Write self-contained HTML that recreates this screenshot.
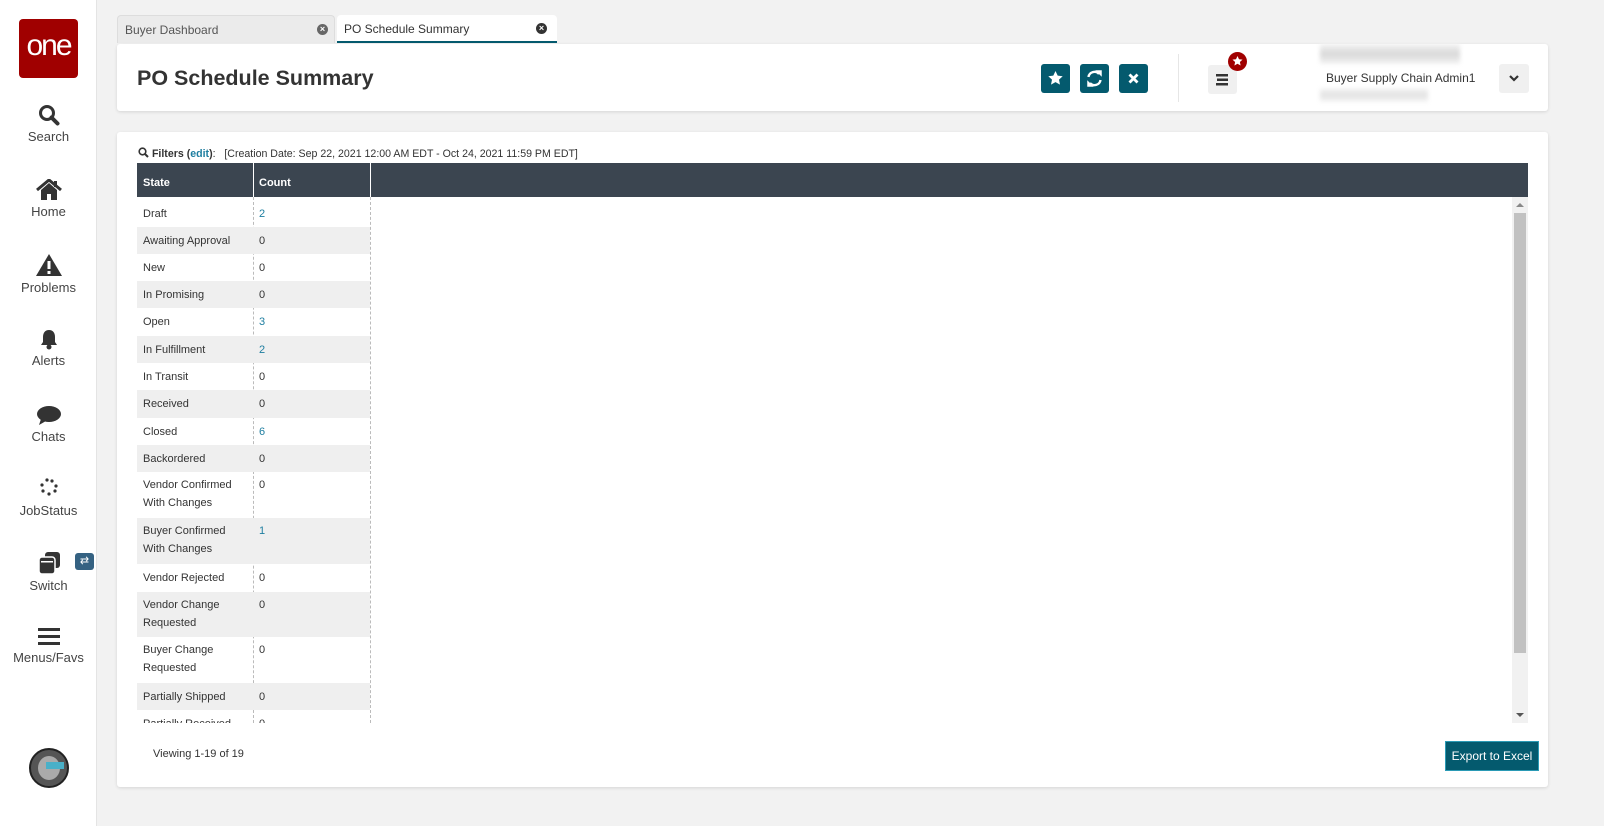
<!DOCTYPE html>
<html><head><style>
*{box-sizing:border-box;margin:0;padding:0}
body{width:1604px;height:826px;background:#f2f2f2;font-family:"Liberation Sans",sans-serif;position:relative;overflow:hidden;color:#333}
.side{position:absolute;left:0;top:0;width:97px;height:826px;background:#fff;border-right:1px solid #e4e4e4}
.logo{position:absolute;left:19px;top:19px;width:59px;height:59px;background:#a00000;border-radius:4px;color:#fff;font-size:30px;text-align:center;line-height:54px;letter-spacing:-2px}
.nav{position:absolute;left:0;width:97px;text-align:center;font-size:13px;color:#444}
.nav svg{display:block;margin:0 auto 3px}
.tab{position:absolute;top:15px;height:28px;font-size:12px;line-height:28px;padding-left:7px;border-radius:4px 4px 0 0}
.x{position:absolute;top:8px;width:11px;height:11px;border-radius:50%;color:#fff;font-size:9px;line-height:11px;text-align:center;font-weight:bold}
.card{position:absolute;left:117px;width:1431px;background:#fff;border-radius:3px;box-shadow:0 1px 3px rgba(0,0,0,.12)}
.btn{position:absolute;top:64px;width:29px;height:29px;background:#045a6e;border-radius:3px}
.hd{position:absolute;left:137px;top:163px;width:1391px;height:34px;background:#3b4550}
.hd div{position:absolute;top:0;height:34px;line-height:40px;color:#fff;font-weight:bold;font-size:11px;padding-left:6px;border-right:1px solid #fff}
.row{position:absolute;left:137px;width:233px;font-size:11px;color:#333}
.row .s{position:absolute;left:6px;line-height:18px}
.row .c{position:absolute;left:122px;line-height:18px}
.g{background:#efefef}
a{color:#1e7ea0;text-decoration:none}
</style></head><body>
<div class="side">
<div class="logo">one</div>
<div class="nav" style="top:104px"><svg width="22" height="22" viewBox="0 0 22 22"><circle cx="9" cy="9" r="6.5" fill="none" stroke="#333" stroke-width="3"/><path d="M13.5 13.5L19.5 19.5" stroke="#333" stroke-width="4" stroke-linecap="round"/></svg>Search</div>
<div class="nav" style="top:179px"><svg width="26" height="22" viewBox="0 0 26 22"><path d="M1 11L13 1 25 11" fill="none" stroke="#333" stroke-width="3"/><path d="M5 11v10h6v-6h4v6h6V11L13 4z" fill="#333"/><rect x="18" y="2" width="3" height="6" fill="#333"/></svg>Home</div>
<div class="nav" style="top:253px"><svg width="28" height="24" viewBox="0 0 28 24"><path d="M14 1L27 23H1z" fill="#333"/><rect x="12.5" y="8" width="3" height="8" fill="#fff"/><rect x="12.5" y="18" width="3" height="3" fill="#fff"/></svg>Problems</div>
<div class="nav" style="top:328px"><svg width="22" height="22" viewBox="0 0 22 22"><path d="M11 2c-4 0-6 3-6 7v5l-2 3h16l-2-3V9c0-4-2-7-6-7z" fill="#333"/><circle cx="11" cy="19" r="2.5" fill="#333"/></svg>Alerts</div>
<div class="nav" style="top:405px"><svg width="26" height="21" viewBox="0 0 26 21"><ellipse cx="13" cy="9" rx="12" ry="8" fill="#333"/><path d="M5 14L3 20 10 16z" fill="#333"/></svg>Chats</div>
<div class="nav" style="top:478px"><svg width="26" height="22" viewBox="0 0 26 22"><g fill="#333"><circle cx="11" cy="2" r="1.6"/><circle cx="16" cy="3" r="1.6"/><circle cx="6" cy="7" r="1.6"/><circle cx="20" cy="8" r="1.6"/><circle cx="7" cy="13" r="1.6"/><circle cx="19" cy="13" r="1.6"/><circle cx="13" cy="16" r="1.6"/></g></svg>JobStatus</div>
<div class="nav" style="top:551px"><svg width="26" height="24" viewBox="0 0 26 24"><rect x="9" y="1" width="15" height="16" rx="3" fill="#333"/><rect x="3" y="6" width="16" height="17" rx="3" fill="#333" stroke="#fff" stroke-width="1.5"/><rect x="5" y="10" width="12" height="1.5" fill="#fff"/></svg>Switch</div>
<div style="position:absolute;left:75px;top:553px;width:19px;height:17px;background:#356282;border-radius:3px;color:#fff;font-size:11px;text-align:center;line-height:17px">⇄</div>
<div class="nav" style="top:627px"><svg width="24" height="20" viewBox="0 0 24 20"><rect x="1" y="1" width="22" height="3" fill="#333"/><rect x="1" y="8" width="22" height="3" fill="#333"/><rect x="1" y="15" width="22" height="3" fill="#333"/></svg>Menus/Favs</div>
<div style="position:absolute;left:29px;top:748px;width:40px;height:40px;border-radius:50%;background:#555;border:2px solid #222"><div style="position:absolute;left:7px;top:6px;width:22px;height:24px;border-radius:50%;background:#aaa"></div><div style="position:absolute;left:15px;top:12px;width:18px;height:7px;background:#4ab0c8"></div></div>
</div>
<div class="tab" style="left:117px;width:218px;background:#ebebeb;color:#555;border:1px solid #ddd;border-bottom:none">Buyer Dashboard<span class="x" style="left:199px;background:#666">×</span></div>
<div class="tab" style="left:337px;width:220px;background:#fff;color:#333;border-bottom:2px solid #045a6e">PO Schedule Summary<span class="x" style="left:199px;background:#333">×</span></div>
<div class="card" style="top:44px;height:67px">
<div style="position:absolute;left:20px;top:22px;font-size:21.5px;font-weight:bold;color:#333">PO Schedule Summary</div>
</div>
<div class="btn" style="left:1041px"><svg width="29" height="29" viewBox="0 0 29 29"><path d="M14.5 7l2.2 4.6 5 .6-3.7 3.4 1 5-4.5-2.5-4.5 2.5 1-5-3.7-3.4 5-.6z" fill="#fff"/></svg></div>
<div class="btn" style="left:1080px"><svg width="29" height="29" viewBox="0 0 29 29"><path d="M8.5 13a6 6 0 0 1 10.5-3M20.5 16a6 6 0 0 1-10.5 3" fill="none" stroke="#fff" stroke-width="2.4"/><path d="M17 7h4v4zM12 22H8v-4z" fill="#fff" stroke="#fff" stroke-width="1.5"/></svg></div>
<div class="btn" style="left:1119px"><svg width="29" height="29" viewBox="0 0 29 29"><path d="M10.5 10.5l8 8M18.5 10.5l-8 8" stroke="#fff" stroke-width="2.8"/></svg></div>
<div style="position:absolute;left:1178px;top:54px;width:1px;height:48px;background:#e6e6e6"></div>
<div style="position:absolute;left:1208px;top:65px;width:29px;height:29px;background:#f0f0f0;border-radius:3px"><svg width="29" height="29" viewBox="0 0 29 29"><rect x="8" y="9" width="12" height="2.5" fill="#333"/><rect x="9" y="13.5" width="11" height="2.5" fill="#333"/><rect x="8" y="18" width="12" height="2.5" fill="#333"/></svg></div>
<div style="position:absolute;left:1228px;top:52px;width:19px;height:19px;border-radius:50%;background:#a00000"><svg width="19" height="19" viewBox="0 0 19 19"><path d="M9.5 4l1.5 3.2 3.5.4-2.6 2.4.7 3.5-3.1-1.8-3.1 1.8.7-3.5-2.6-2.4 3.5-.4z" fill="#fff"/></svg></div>
<div style="position:absolute;left:1320px;top:44px;width:140px;height:20px;background:linear-gradient(#f4f4f4,#d8d8d8,#f4f4f4);filter:blur(2px)"></div>
<div style="position:absolute;left:1326px;top:71px;font-size:12px;color:#333">Buyer Supply Chain Admin1</div>
<div style="position:absolute;left:1320px;top:88px;width:108px;height:14px;background:linear-gradient(#f6f6f6,#e2e2e2,#f6f6f6);filter:blur(2px)"></div>
<div style="position:absolute;left:1499px;top:64px;width:30px;height:29px;background:#f0f0f0;border-radius:3px"><svg width="30" height="29" viewBox="0 0 30 29"><path d="M11 12l4 4 4-4" fill="none" stroke="#333" stroke-width="2.2"/></svg></div>
<div class="card" style="top:132px;height:655px"></div>
<div style="position:absolute;left:138px;top:147px;font-size:10.6px;color:#333"><svg width="11" height="11" viewBox="0 0 11 11" style="vertical-align:-1px"><circle cx="4.5" cy="4.5" r="3.3" fill="none" stroke="#333" stroke-width="1.6"/><path d="M7 7l3 3" stroke="#333" stroke-width="2"/></svg> <b>Filters (<a>edit</a>)</b>:&nbsp;&nbsp; [Creation Date: Sep 22, 2021 12:00 AM EDT - Oct 24, 2021 11:59 PM EDT]</div>
<div class="hd"><div style="left:0;width:117px">State</div><div style="left:116px;width:118px">Count</div></div>
<div style="position:absolute;left:253px;top:197px;height:526px;border-left:1px dashed #bbb"></div>
<div style="position:absolute;left:370px;top:197px;height:526px;border-left:1px dashed #bbb"></div>
<div style="position:absolute;left:137px;top:197px;width:233px;height:526px;overflow:hidden">
<div id="rows"></div>
</div>
<div style="position:absolute;left:1512px;top:197px;width:16px;height:526px;background:#f1f1f1"><div style="position:absolute;left:2px;top:16px;width:12px;height:440px;background:#c1c1c1"></div><div style="position:absolute;left:4px;top:6px;border:4px solid transparent;border-bottom-color:#888;border-top:0"></div><div style="position:absolute;left:4px;bottom:6px;border:4px solid transparent;border-top-color:#555;border-bottom:0"></div></div>
<div style="position:absolute;left:153px;top:748px;font-size:11px;color:#333">Viewing 1-19 of 19</div>
<div style="position:absolute;left:1445px;top:741px;width:94px;height:30px;background:#045a6e;border:1px solid #2a9ab5;color:#fff;font-size:12px;text-align:center;line-height:28px">Export to Excel</div>
<script>
var r=[["Draft","2",27],["Awaiting Approval","0",27],["New","0",27],["In Promising","0",27],["Open","3",28],["In Fulfillment","2",27],["In Transit","0",27],["Received","0",28],["Closed","6",27],["Backordered","0",27],["Vendor Confirmed<br>With Changes","0",46],["Buyer Confirmed<br>With Changes","1",46],["Vendor Rejected","0",28],["Vendor Change<br>Requested","0",45],["Buyer Change<br>Requested","0",46],["Partially Shipped","0",27],["Partially Received","0",27]];
var h="",y=3;r.forEach(function(a,i){var c=a[1]!="0"?'<a>'+a[1]+'</a>':a[1];h+='<div class="row'+(i%2?' g':'')+'" style="left:0;top:'+y+'px;height:'+a[2]+'px"><span class="s" style="top:'+(a[2]>30?4:5)+'px">'+a[0]+'</span><span class="c" style="top:'+(a[2]>30?4:5)+'px">'+c+'</span></div>';y+=a[2];});
document.getElementById("rows").innerHTML=h;
</script>
</body></html>
